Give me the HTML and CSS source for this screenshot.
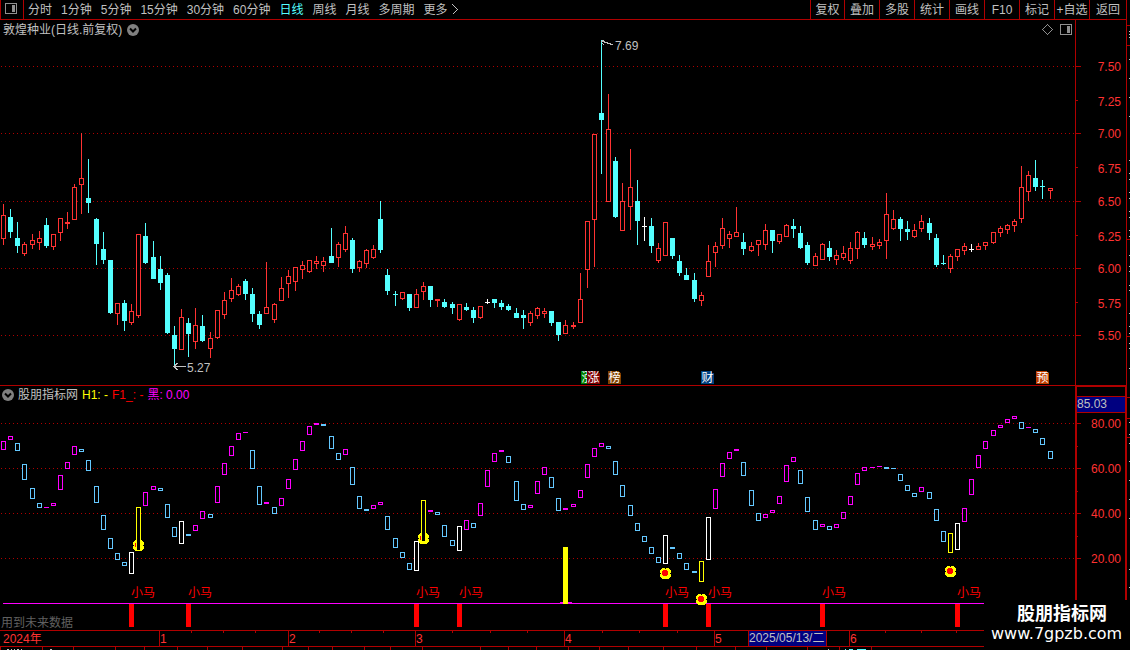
FILE: index.html
```
<!DOCTYPE html>
<html lang="zh-CN">
<head>
    <meta charset="UTF-8">
    <meta name="viewport" content="width=device-width, initial-scale=1.0">
    <title>敦煌种业</title>
    <link rel="stylesheet" href="styles.css">
</head>
<body>
    <div class="main">
        <nav class="toolbar">
            <button class="layout-btn" aria-label="布局">
                <svg width="12" height="11"><rect x="0.5" y="0.5" width="11" height="10" rx="1" class="icon-line"/><rect x="7" y="2" width="3" height="7" class="icon-fill"/></svg>
            </button>
            <div class="periods">
                <button>分时</button>
                <button>1分钟</button>
                <button>5分钟</button>
                <button>15分钟</button>
                <button>30分钟</button>
                <button>60分钟</button>
                <button class="active">日线</button>
                <button>周线</button>
                <button>月线</button>
                <button>多周期</button>
                <button class="more">更多
                    <svg width="6" height="11"><path d="M0.5 0.5 L5.5 5.5 L0.5 10.5" class="icon-light"/></svg>
                </button>
            </div>
            <div class="tools">
                <button>复权</button>
                <button>叠加</button>
                <button>多股</button>
                <button>统计</button>
                <button>画线</button>
                <button>F10</button>
                <button>标记</button>
                <button>+自选</button>
                <button>返回</button>
            </div>
        </nav>

        <section class="pane">
            <div class="plot">
                <div class="pane-head">
                    <span>敦煌种业(日线.前复权)</span>
                    <button class="round-btn" aria-label="展开">
                        <svg width="12" height="12"><circle cx="6" cy="6" r="6"/><path d="M3 4.5 L6 7.5 L9 4.5"/></svg>
                    </button>
                    <span class="corner-icons">
                        <svg width="11" height="11"><path d="M5.5 0.5 L10.5 5.5 L5.5 10.5 L0.5 5.5 Z" class="icon-line"/></svg>
                        <svg width="12" height="11"><rect x="0.5" y="0.5" width="11" height="10" rx="1" class="icon-line"/><rect x="7" y="2" width="3" height="7" class="icon-fill"/></svg>
                    </span>
                </div>
                <svg class="price-chart" id="price"></svg>
            </div>
            <div class="axis">
                <svg class="price-axis" id="priceAxis"></svg>
            </div>
        </section>

        <section class="pane">
            <div class="plot">
                <div class="pane-head indicator-head">
                    <button class="round-btn" aria-label="收起">
                        <svg width="12" height="12"><circle cx="6" cy="6" r="6"/><path d="M3 4.5 L6 7.5 L9 4.5"/></svg>
                    </button>
                    <span>股朋指标网</span>
                    <span class="yellow">H1: -</span>
                    <span class="red">F1_: -</span>
                    <span class="magenta">黑: 0.00</span>
                </div>
                <svg class="indicator-chart" id="indicator"></svg>
            </div>
            <div class="axis indicator-axis">
                <div class="cursor-value">85.03</div>
                <svg class="value-axis" id="valueAxis"></svg>
            </div>
        </section>

        <svg class="timeline" id="timeline"></svg>
    </div>
    <div class="side">
        <svg class="side-strip" id="side"></svg>
    </div>
    <div class="watermark">
        <strong>股朋指标网</strong>
        <span>www.7gpzb.com</span>
    </div>
    <script src="chart.js"></script>
</body>
</html>
```

FILE: styles.css
```
* {
    box-sizing: border-box;
}
body {
    margin: 0;
    min-height: 100vh;
    display: flex;
    position: relative;
    overflow: hidden;
    background: #000;
    color: #c0c0c0;
    font-family: "Liberation Sans", "Noto Sans CJK SC", sans-serif;
    font-size: 12px;
    line-height: 16px;
}
button {
    margin: 0;
    padding: 0;
    border: 0;
    background: none;
    color: inherit;
    font: inherit;
    white-space: nowrap;
    cursor: pointer;
}
svg {
    display: block;
    flex: none;
    shape-rendering: crispEdges;
}
.main {
    flex: 1;
    min-width: 0;
    border-right: 1px solid #b00000;
}

/* toolbar */
.toolbar {
    display: flex;
    height: 20px;
    border-bottom: 1px solid #b00000;
}
.layout-btn {
    width: 24px;
    padding: 0 4px 2px;
    border-left: 1px solid #b00000;
    border-right: 1px solid #b00000;
}
.periods {
    display: flex;
    align-items: center;
    gap: 9px;
    padding-left: 4px;
}
.periods .active {
    color: #54ffff;
}
.more {
    display: flex;
    align-items: center;
    gap: 4px;
}
.tools {
    display: grid;
    grid-template-columns: 34px repeat(7, 35px) 37px;
    margin-left: auto;
}
.tools button {
    border-left: 1px solid #b00000;
}

/* panes */
.pane {
    display: flex;
    border-bottom: 1px solid #b00000;
}
.plot {
    flex: 1;
    min-width: 0;
    border-right: 1px solid #b00000;
}
.axis {
    width: 50px;
}
.pane-head {
    display: flex;
    align-items: center;
    gap: 5px;
    height: 20px;
    padding: 0 3px 1px;
}
.indicator-head {
    gap: 4px;
    height: 17px;
    padding: 0 2px;
}
.round-btn svg {
    shape-rendering: auto;
}
.round-btn circle {
    fill: #808080;
}
.round-btn path {
    fill: none;
    stroke: #000;
    stroke-width: 2;
}
.corner-icons {
    display: flex;
    gap: 7px;
    margin-left: auto;
}
.icon-line {
    fill: none;
    stroke: #909090;
}
.icon-light {
    fill: none;
    stroke: #c0c0c0;
}
.icon-fill {
    fill: #909090;
}
.price-chart {
    width: 100%;
    height: 345px;
}
.price-axis {
    width: 100%;
    height: 365px;
}
.indicator-chart {
    width: 100%;
    height: 227px;
}
.indicator-axis {
    padding-top: 9px;
    border: solid #b00000;
    border-width: 1px 1px 0;
}
.cursor-value {
    border: solid #b00000;
    border-width: 1px 0;
    background: #000080;
    line-height: 15px;
}
.value-axis {
    width: 100%;
    height: 217px;
}
.timeline {
    width: 100%;
    height: 19px;
}
.side {
    width: 3px;
}
.side-strip {
    width: 3px;
    height: 650px;
}

/* colours */
.yellow {
    color: #ffff00;
}
.red {
    color: #ff0000;
}
.magenta {
    color: #ff00ff;
}
.axis-text {
    fill: #ff3232;
}
.light-text {
    fill: #c0c0c0;
}

.watermark {
    position: absolute;
    right: 0;
    top: 600px;
    width: 146px;
    height: 50px;
    padding-left: 7px;
    background: #000;
    color: #fff;
    display: flex;
    flex-direction: column;
}
.watermark strong {
    padding-left: 26px;
    font-size: 18px;
    line-height: 28px;
}
.watermark span {
    font-family: "DejaVu Sans", sans-serif;
    font-size: 16px;
    line-height: 12px;
}
```

FILE: chart.js
```
const NS = 'http://www.w3.org/2000/svg';
const LINE = '#b00000';
const COLORS = { r: '#ff3232', c: '#54ffff', w: '#ffffff', m: '#ff00ff', b: '#64c8ff', y: '#ffff00' };

// high, body top, body bottom, low, colour
const candles = `
204,215,239,245,r 209,217,232,238,c 222,238,246,253,c 242,244,254,256,r 234,240,245,249,r 231,238,243,250,r
218,225,246,248,c 234,234,247,250,r 218,218,233,241,r 212,222,224,229,r 184,187,220,220,r 133,178,185,214,r
159,198,203,213,c 218,219,244,265,c 232,249,260,264,c 260,260,313,314,c 303,303,314,325,r 300,303,321,331,c
304,311,323,325,r 234,234,316,318,r 223,236,263,264,c 241,257,279,279,c 256,269,283,290,c 273,275,333,334,c
326,335,349,365,c 309,317,350,350,r 318,323,334,357,c 308,325,342,349,r 315,326,341,342,c 332,338,349,358,r
310,310,338,339,r 292,300,315,319,r 278,290,299,302,r 284,286,295,296,r 279,281,294,300,c 288,294,314,322,c
311,314,325,329,c 262,307,314,314,r 303,304,320,323,r 277,288,301,301,r 270,276,284,298,r 267,267,282,291,r
261,265,270,279,r 260,260,272,273,r 256,261,264,269,r 257,261,266,272,r 228,256,263,263,c 242,244,258,267,r
226,233,250,252,r 238,240,269,273,c 260,261,268,272,r 249,250,264,268,r 245,249,258,259,r 201,219,250,253,c
269,275,291,295,c 291,294,295,306,c 292,292,299,300,r 294,294,308,311,c 289,294,308,308,r 282,286,292,300,r
286,286,300,307,c 299,299,301,307,r 299,302,307,308,c 302,304,308,314,c 304,304,320,321,r 303,307,310,311,c
307,310,318,323,c 306,306,318,319,r 299,302,303,304,w 299,299,303,308,c 300,303,307,310,c 304,306,310,311,c
308,313,318,318,c 310,315,318,329,c 311,313,323,326,r 307,308,316,319,r 308,311,314,318,r 311,311,323,326,c
322,322,335,341,c 320,325,334,334,r 322,325,327,329,r 273,299,323,323,r 221,221,270,288,r 134,134,220,267,r
40,113,120,174,c 94,129,202,202,r 157,161,217,218,c 183,201,231,231,r 149,187,207,230,r 180,201,221,245,c
217,226,227,241,w 218,226,246,253,c 243,248,261,263,r 222,222,256,256,r 238,238,256,259,c 255,261,273,276,c
268,275,280,280,c 273,280,299,302,c 292,295,301,306,r 245,261,277,277,r 242,246,253,267,r 218,228,246,249,r
231,234,239,248,r 207,232,237,237,r 233,242,249,255,c 242,246,251,252,r 240,240,245,256,r 224,230,245,250,r
230,230,241,253,c 234,234,242,244,r 224,225,237,237,r 219,226,229,238,c 226,233,248,249,c 242,245,263,265,c
253,256,266,266,r 243,244,260,260,r 241,248,257,261,c 250,255,260,265,r 246,253,258,260,r 242,248,261,264,r
231,232,249,259,r 232,238,245,248,c 237,244,247,250,r 239,242,246,249,r 193,214,241,259,r 210,219,229,230,r
217,219,229,241,c 221,229,232,240,c 224,230,237,238,r 215,221,229,232,r 218,223,233,240,c 234,238,265,267,c
255,263,264,265,c 254,256,269,273,r 249,249,257,261,r 243,246,251,255,r 244,249,250,252,w 243,246,250,250,r
242,242,246,250,r 232,232,243,244,r 226,228,233,237,r 224,225,230,234,r 219,221,226,232,r 166,187,219,223,r
171,175,192,201,r 160,178,187,191,c 180,186,187,199,c 188,188,191,199,r`;

// top, bottom, colour
const boxes = `
441,450,m 436,440,m 443,451,b 464,480,b 488,499,b 503,508,b 507,508,m 503,506,m 475,490,m 462,469,m
446,455,m 449,452,b 460,471,b 486,503,b 515,530,b 538,549,b 553,560,b 562,566,b 552,574,w 507,551,y
492,506,m 486,490,m 488,491,b 504,518,b 527,537,b 521,544,w 534,536,b 525,531,m 511,519,m 514,518,b
486,503,m 463,475,m 446,456,m 433,440,m 432,433,m 450,469,b 486,505,b 502,504,m 507,514,b 498,506,m
479,489,m 459,470,m 441,451,m 426,435,m 423,425,m 424,426,b 436,449,b 453,460,b 449,455,m 467,485,b
496,509,b 509,511,b 505,509,m 502,505,m 516,530,b 538,548,b 552,558,b 563,570,b 541,571,w 500,542,y
510,512,m 512,515,b 525,537,b 540,546,b 526,551,w 520,530,m 523,528,b 503,516,m 470,487,m 453,462,m
450,452,m 456,463,b 481,501,b 504,510,b 505,508,m 481,494,m 467,475,m 477,488,b 498,511,b 508,510,m
504,507,m 490,498,m 464,478,m 448,457,m 443,447,m 446,449,b 461,475,b 485,497,b 505,516,b 523,531,b
536,542,b 547,554,b 557,563,b 535,564,w 547,549,b 553,559,b 563,570,b 571,573,b 561,582,y 517,560,w
489,509,m 463,477,m 452,459,m 449,451,m 462,476,b 490,506,b 513,521,b 514,518,m 510,513,m 496,504,m
465,482,m 457,462,m 470,484,b 497,512,b 520,530,b 524,527,m 526,530,b 524,528,m 512,519,m 496,505,m
473,485,m 467,471,m 467,468,m 466,467,m 467,469,b 468,469,b 474,481,b 485,491,b 493,497,b 487,492,m
492,499,b 509,521,b 531,542,b 533,553,y 523,550,w 508,522,m 479,495,m 455,468,m 441,449,m 430,436,m
425,428,m 419,423,m 416,419,m 422,429,b 427,428,m 429,433,b 438,445,b 451,459,b`;

const signals = [18, 26, 58, 64, 93, 99, 115, 134];

function parse(text) {
    return text.trim().split(/\s+/).map(row => row.split(',').map(v => isNaN(v) ? v : Number(v)));
}

function add(parent, name, attrs, text) {
    const node = document.createElementNS(NS, name);
    for (const key in attrs) node.setAttribute(key, attrs[key]);
    if (text) node.textContent = text;
    parent.appendChild(node);
    return node;
}

function rect(parent, x, y, width, height, fill) {
    return add(parent, 'rect', { x, y, width, height, fill });
}

function box(parent, x, top, bottom, color) {
    if (bottom - top < 3) {
        rect(parent, x - 2, top, 5, bottom - top, color);
    } else {
        add(parent, 'rect', { x: x - 1.5, y: top + 0.5, width: 4, height: bottom - top - 1, fill: '#000', stroke: color });
    }
}

function clear(id, offset) {
    const svg = document.getElementById(id);
    svg.innerHTML = '';
    return add(svg, 'g', { transform: `translate(0 ${-offset})` });
}

function grid(g, levels, width) {
    levels.forEach(y => add(g, 'line', { x1: 1, x2: width, y1: y + 0.5, y2: y + 0.5, stroke: LINE, 'stroke-dasharray': '1 3' }));
}

function ball(g, x, y, full) {
    rect(g, x - 3, y - 5, 7, 11, COLORS.y);
    rect(g, x - 5, y - 3, 11, 7, COLORS.y);
    rect(g, x - 4, y - 4, 9, 9, COLORS.y);
    rect(g, x, y - 5, 1, 1, '#000');
    rect(g, x - 5, y, 1, 1, '#000');
    rect(g, x + 5, y, 1, 1, '#000');
    if (full) {
        rect(g, x - 2, y - 3, 4, 6, '#ff0000');
        rect(g, x - 3, y - 2, 6, 4, '#ff0000');
    } else {
        rect(g, x - 3, y - 2, 1, 4, '#ff0000');
    }
}

function badge(g, x, color, text) {
    add(g, 'path', { d: `M${x} 371 h11 v2 h2 v11 h-13 Z`, fill: color });
    add(g, 'text', { x: x + 0.5, y: 382, fill: '#fff' }, text);
}

function draw() {
    const width = document.getElementById('price').clientWidth;
    const k = width / 1075;
    const barX = i => Math.floor((3.55 + 7.119 * i) * k);
    const sx = x => Math.round(x * k);

    // price candles
    let g = clear('price', 40);
    grid(g, [66, 133, 201, 268, 335], width);
    parse(candles).forEach(([high, top, bottom, low, c], i) => {
        const x = barX(i);
        const color = COLORS[c];
        rect(g, x, high, 1, low - high, color);
        if (c === 'r') box(g, x, top, bottom, color);
        else rect(g, x - 2, top, 5, bottom - top, color);
    });
    const peak = barX(84);
    add(g, 'path', { d: `M${peak + 3} 40.5 h-2 M${peak} 41.5 h4 M${peak + 3} 42.5 h4 M${peak + 6} 43.5 h4 M${peak + 9} 44.5 h3 M${peak + 1} 43.5 h1 M${peak + 2} 44.5 h1`, stroke: '#c0c0c0' });
    add(g, 'text', { x: peak + 14, y: 50, class: 'light-text' }, '7.69');
    const low = barX(24);
    add(g, 'path', { d: `M${low} 366.5 h12 M${low + 3.5} 363 l-3.5 3.5 l3.5 3.5`, stroke: '#c0c0c0', fill: 'none' });
    add(g, 'text', { x: low + 13, y: 372, class: 'light-text' }, '5.27');
    badge(g, sx(581), '#008000', '涨');
    badge(g, sx(581) + 6, '#800000', '涨');
    badge(g, sx(608), '#804000', '榜');
    badge(g, sx(701), '#004080', '财');
    badge(g, sx(1036), '#c04000', '预');

    g = clear('priceAxis', 20);
    [66, 133, 201, 268, 335].forEach((y, i) => {
        rect(g, 0, y, 5, 1, LINE);
        add(g, 'text', { x: 45, y: y + 5, 'text-anchor': 'end', class: 'axis-text' }, (7.5 - i * 0.5).toFixed(2));
    });
    [100, 167, 235, 302].forEach((y, i) => {
        rect(g, 0, y, 2, 1, LINE);
        add(g, 'text', { x: 45, y: y + 6, 'text-anchor': 'end', class: 'axis-text' }, (7.25 - i * 0.5).toFixed(2));
    });

    // indicator
    g = clear('indicator', 403);
    grid(g, [423, 468, 513, 558], width);
    ball(g, barX(19), 545, false);
    ball(g, barX(59), 538, false);
    parse(boxes).forEach(([top, bottom, c], i) => box(g, barX(i), top, bottom, COLORS[c]));
    rect(g, 3, 603, width, 1, COLORS.m);
    rect(g, barX(79) - 5, 602, 12, 1, COLORS.m);
    rect(g, barX(79) - 2, 547, 5, 57, COLORS.y);
    ball(g, barX(93), 573, true);
    ball(g, barX(98), 599, true);
    ball(g, barX(133), 571, true);
    signals.forEach(i => {
        rect(g, barX(i) - 2, 604, 5, 23, '#ff0000');
        add(g, 'text', { x: barX(i), y: 597, fill: '#ff0000' }, '小马');
    });
    add(g, 'text', { x: 1, y: 627, fill: '#606060' }, '用到未来数据');

    g = clear('valueAxis', 413);
    [423, 468, 513, 558].forEach((y, i) => {
        rect(g, 0, y, 4, 1, LINE);
        add(g, 'text', { x: 44, y: y + 5, 'text-anchor': 'end', class: 'axis-text' }, (80 - i * 20).toFixed(2));
    });
    [446, 491, 536].forEach(y => rect(g, 0, y, 1, 1, LINE));

    // dates
    g = clear('timeline', 631);
    add(g, 'text', { x: 3, y: 643, class: 'axis-text' }, '2024年');
    [[159, '1'], [288, '2'], [415, '3'], [564, '4'], [714, '5'], [849, '6']].forEach(([x, label]) => {
        rect(g, sx(x), 631, 1, 15, LINE);
        add(g, 'text', { x: sx(x) + 1, y: 643, class: 'axis-text' }, label);
    });
    [191, 223, 255, 319, 351, 383, 452, 490, 527, 602, 639, 677, 885, 921, 956].forEach(x => rect(g, sx(x), 631, 1, 2, LINE));
    rect(g, sx(748), 631, 79, 15, LINE);
    rect(g, sx(748) + 1, 631, 77, 15, '#000080');
    add(g, 'text', { x: sx(748) + 1, y: 642, class: 'light-text' }, '2025/05/13/二');
    rect(g, 0, 646, width + 51, 1, LINE);
    [0, 42, 73, 115, 144, 177, 207, 242, 282, 308, 332, 364, 390, 422, 480, 508, 536, 568, 599, 628, 663, 696, 735, 766, 807, 839, 871]
        .forEach(x => rect(g, sx(x), 647, 1, 3, LINE));
    [[7, 2], [11, 1], [14, 1], [17, 2], [21, 1], [50, 2], [828, 1]].forEach(([x, w]) => rect(g, sx(x), 649, w, 1, '#c0c0c0'));
    [[845, 1], [849, 4], [857, 9]].forEach(([x, w]) => rect(g, sx(x), 649, w, 1, COLORS.c));

    // edge of the quote list
    g = clear('side', 0);
    [25, 45, 239, 336, 397, 418, 437].forEach(y => rect(g, 0, y, 3, 1, LINE));
    [31, 34, 37, 59, 78, 97, 116, 160, 173, 179, 192, 198, 211, 217, 230, 236, 255, 266, 271, 285, 290, 313, 326, 333, 343, 348, 368, 422, 434, 443, 461, 480, 499, 518, 569, 587]
        .forEach(y => rect(g, 2, y, 1, 1, '#c0c0c0'));
}

draw();
window.addEventListener('resize', draw);
```
